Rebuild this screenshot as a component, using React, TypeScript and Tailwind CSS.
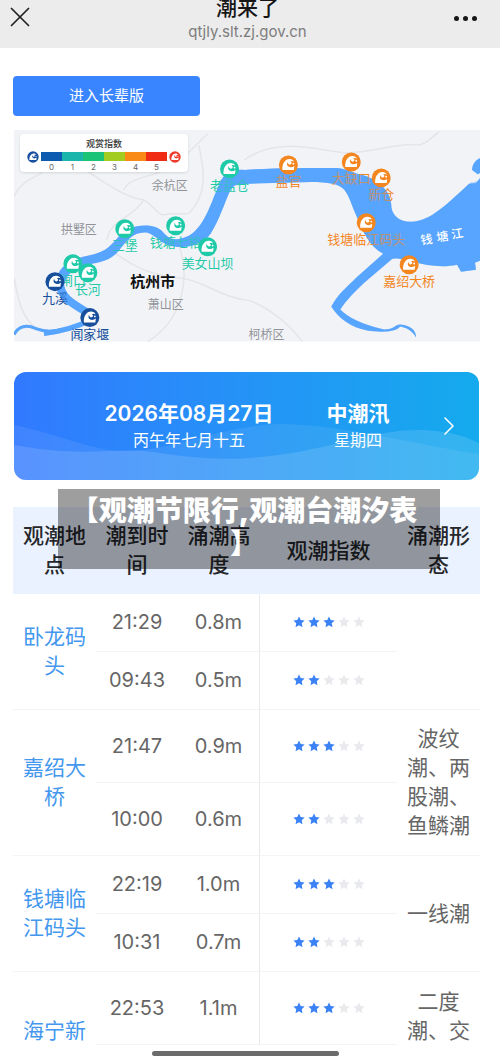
import React from "react";
import { X, ChevronRight } from "lucide-react";

const RIVER =
  "M245 170C275 168 300 168 338 168C348 169 354 173 363 175C378 179 391 190 392 204C392 215 399 222 412 222C432 221 448 204 472 182C478 182 481 180 481 176V261L476 263L477 270L462 272L458 265C440 269 420 264 405 260C399 259 395 258 392 260L365 283C356 292 347 300 341 310C349 318 362 325 385 330C395 330 396 325 401 325C412 326 417 331 417 338C413 331 407 328 401 327C397 333 380 333 368 331C352 328 339 319 332 307C338 295 347 288 358 277L384 254C370 247 364 232 358 218C352 205 350 196 345 190C341 184 328 182 312 182L245 184Z";

const STREAM =
  "M56 284C56 274 62 266 72 261C84 255 98 256 108 248C118 240 120 232 132 228C142 224 156 225 162 231C168 237 170 241 180 239C198 237 207 216 214 198C219 186 222 176 229 172C234 169 240 170 246 170V184C240 184 234 184 231 190C225 203 220 220 211 234C205 243 190 249 176 247C162 246 156 235 148 233C134 231 127 241 119 251C108 264 96 262 84 266C72 270 66 276 65 284Z";

type Spot = { name: string; x: number; y: number; color: string };

const GREEN = "#1fcaa8";
const ORANGE = "#f3861f";
const NAVY = "#174f9c";

const SPOTS: Spot[] = [
  { name: "老盐仓", x: 230, y: 169, color: GREEN },
  { name: "盐官", x: 289, y: 165, color: ORANGE },
  { name: "大缺口", x: 352, y: 162, color: ORANGE },
  { name: "新仓", x: 382, y: 178, color: ORANGE },
  { name: "钱塘临江码头", x: 367, y: 223, color: ORANGE },
  { name: "嘉绍大桥", x: 410, y: 265, color: ORANGE },
  { name: "钱塘七格", x: 176, y: 226, color: GREEN },
  { name: "美女山坝", x: 208, y: 247, color: GREEN },
  { name: "三堡", x: 125, y: 229, color: GREEN },
  { name: "闸口", x: 73, y: 264, color: GREEN },
  { name: "长河", x: 88, y: 273, color: GREEN },
  { name: "九溪", x: 55, y: 282, color: NAVY },
  { name: "闻家堰", x: 90, y: 318, color: NAVY },
];

function Water() {
  return (
    <>
      <path d={STREAM} fill="#58a5ff" />
      <path d={RIVER} fill="#58a5ff" />
      <g fill="none" stroke="#58a5ff">
        <path d="M60 282C60 298 72 304 91 315" strokeWidth="8" />
        <path d="M14 335C19 326 27 325 36 329C46 333 54 332 62 330" strokeWidth="3" />
        <path d="M44 334C62 332 76 328 92 320" strokeWidth="5" />
      </g>
    </>
  );
}

function WaveMark({ color }: { color: string }) {
  return (
    <>
      <circle r="9.5" fill={color} />
      <path
        d="M-6 5C-6.500 -1 -3.500 -6 1.200 -6C3.500 -6 5 -5 5.600 -3.300C4.200 -4.200 2.700 -4 1.900 -3.100C3 -3 3.500 -2 3 -1.100C2.400 -.1 1 0 .1 -.9C-.6 -1.500 -.8 -2.400 -.6 -3.200C-1.800 -1.600 -1.600 .6 0 1.700C1.800 2.900 4 2.400 6 1L5.500 5Z"
        fill="#fff"
      />
      <circle cx="5" cy="-1.200" r=".9" fill="#fff" />
    </>
  );
}

function LegendMark({ color }: { color: string }) {
  return (
    <svg viewBox="-10 -10 20 20" className="size-3 shrink-0" aria-hidden="true">
      <WaveMark color={color} />
    </svg>
  );
}

const SCALE = [
  "bg-[#0d5bb0]",
  "bg-[#1cb5ac]",
  "bg-[#1bc376]",
  "bg-[#a3cc20]",
  "bg-[#f98a17]",
  "bg-[#f02c14]",
];

function RiverMap() {
  return (
    <section className="relative ml-px mt-3.5 overflow-hidden" aria-label="观潮地图">
      <svg viewBox="14 130 467 212" className="block w-full">
        <rect x="14" y="130" width="467" height="212" fill="#f2f3f7" />
        <g fill="none" stroke="#e4e5e9" strokeWidth="1.5">
          <path d="M14 197C20 182 32 179 42 173M88 172C105 182 125 198 144 200C160 210 157 218 170 214H188M124 190C128 180 142 178 155 174C180 166 190 150 208 134M199 145C206 175 207 195 189 214M144 200C134 218 110 220 107 240M108 248C130 265 150 276 180 278C205 281 220 298 250 301C270 308 290 325 303 342M180 248C190 278 184 320 148 342M14 278C18 300 22 320 38 330M245 160C275 138 310 148 345 153C380 152 400 142 420 145C430 143 432 137 440 132" />
        </g>
        <Water />
        <path d="M481 158C475 161 473 166 473 170L481 176Z" fill="#58a5ff" />
        <path d="M481 173C475 177 469 180 466 184L477 183L481 178Z" fill="#f2f3f7" />

        <g textAnchor="middle" fontSize="13">
          {SPOTS.map((s) => (
            <text key={s.name} x={s.x} y={s.y + 21} fill={s.color}>
              {s.name}
            </text>
          ))}
        </g>
        <g opacity=".35">
          <Water />
        </g>
        {SPOTS.map((s) => (
          <g key={s.name} transform={`translate(${s.x} ${s.y})`}>
            <WaveMark color={s.color} />
          </g>
        ))}

        <g textAnchor="middle" fontSize="12" fill="#919398">
          <text x="170" y="190">余杭区</text>
          <text x="79" y="234">拱墅区</text>
          <text x="166" y="309">萧山区</text>
          <text x="267" y="339">柯桥区</text>
        </g>
        <text x="153" y="287" textAnchor="middle" fontSize="15" fontWeight="700" fill="#111">
          杭州市
        </text>
        <g fontSize="12" fontWeight="500" fill="#fff" textAnchor="middle">
          <text transform="translate(428 244) rotate(-9)">钱</text>
          <text transform="translate(444 241) rotate(-9)">塘</text>
          <text transform="translate(459 238) rotate(-9)">江</text>
        </g>
      </svg>

      <div className="absolute left-1.5 top-1 flex h-[38px] w-[168px] flex-col items-center rounded-sm bg-white pt-1 shadow-sm">
        <div className="text-[9px] font-medium leading-[11px] text-[#333]">观赏指数</div>
        <div className="mt-0.5 flex items-start gap-0.5">
          <LegendMark color="#174fa0" />
          <ul className="flex text-center text-[8px] leading-[9px] text-[#666]">
            {SCALE.map((tone, i) => (
              <li key={tone} className="w-[21px]">
                <span className={`mb-0.5 mt-px block h-[9px] ${tone}`} />
                {i}
              </li>
            ))}
          </ul>
          <LegendMark color="#ef3b2b" />
        </div>
      </div>
    </section>
  );
}

function Stars({ value }: { value: number }) {
  return (
    <div className="flex justify-center gap-[3px]" role="img" aria-label={`${value} / 5`}>
      {[1, 2, 3, 4, 5].map((n) => (
        <svg
          key={n}
          viewBox="0 0 24 24"
          className={n <= value ? "size-3 fill-[#3b82f6]" : "size-3 fill-[#e9eaed]"}
        >
          <path d="M12 1l3.400 7.200 7.800 1-5.700 5.400 1.400 7.900L12 18.700l-6.900 3.800 1.400-7.900L.8 9.200l7.800-1z" />
        </svg>
      ))}
    </div>
  );
}

type Tide = { time: string; height: string; stars: number };
type Place = { name: string; form: string; tides: Tide[]; tall?: boolean; last?: boolean };

const PLACES: Place[] = [
  {
    name: "卧龙码头",
    form: "",
    tides: [
      { time: "21:29", height: "0.8m", stars: 3 },
      { time: "09:43", height: "0.5m", stars: 2 },
    ],
  },
  {
    name: "嘉绍大桥",
    form: "波纹潮、两股潮、鱼鳞潮",
    tall: true,
    tides: [
      { time: "21:47", height: "0.9m", stars: 3 },
      { time: "10:00", height: "0.6m", stars: 2 },
    ],
  },
  {
    name: "钱塘临江码头",
    form: "一线潮",
    tides: [
      { time: "22:19", height: "1.0m", stars: 3 },
      { time: "10:31", height: "0.7m", stars: 2 },
    ],
  },
  {
    name: "海宁新",
    form: "二度潮、交",
    tall: true,
    last: true,
    tides: [{ time: "22:53", height: "1.1m", stars: 3 }],
  },
];

function TideTable() {
  return (
    <table className="w-full table-fixed border-separate border-spacing-0 text-center text-[21px] leading-[29px] text-[#666]">
      <colgroup>
        <col className="w-[83px]" />
        <col className="w-[82px]" />
        <col className="w-[82px]" />
        <col />
        <col className="w-[83px]" />
      </colgroup>
      <thead className="bg-[#ebf2ff] text-[#26282c]">
        <tr className="h-[87px]">
          <th scope="col" className="px-2.5 font-medium">观潮地点</th>
          <th scope="col" className="px-2 font-medium">潮到时间</th>
          <th scope="col" className="px-2 font-medium">涌潮高度</th>
          <th scope="col" className="font-medium">观潮指数</th>
          <th scope="col" className="px-2.5 font-medium">涌潮形态</th>
        </tr>
      </thead>
      <tbody>
        {PLACES.map((p) =>
          p.tides.map((t, i) => (
            <tr key={t.time} className={p.tall ? "h-[73px]" : "h-[58px]"}>
              {i === 0 && (
                <th
                  scope="rowgroup"
                  rowSpan={p.tides.length}
                  className={
                    p.last
                      ? "px-2.5 align-bottom font-normal text-[#4397ee]"
                      : "border-b border-[#f3f4f6] px-2.5 align-middle font-normal text-[#4397ee]"
                  }
                >
                  {p.name}
                </th>
              )}
              <td className="border-b border-[#f3f4f6] text-xl">{t.time}</td>
              <td className="border-b border-r border-[#f3f4f6] border-r-[#e8e9ec] text-xl">
                {t.height}
              </td>
              <td className="border-b border-[#f3f4f6]">
                <Stars value={t.stars} />
              </td>
              {i === 0 && (
                <td
                  rowSpan={p.tides.length}
                  className={
                    p.last
                      ? "px-2.5 align-bottom"
                      : "border-b border-[#f3f4f6] px-2.5 align-middle"
                  }
                >
                  {p.form}
                </td>
              )}
            </tr>
          )),
        )}
      </tbody>
    </table>
  );
}

export default function App() {
  return (
    <div className="overflow-hidden bg-white font-['Inter','Noto_Sans_CJK_SC',sans-serif]">
      <header className="flex h-12 items-start justify-between bg-[#ececec] px-[3px]">
        <button type="button" aria-label="关闭" className="text-[#222]">
          <X size={34} strokeWidth={1.2} />
        </button>
        <div className="-mt-1.5 pl-1 text-center">
          <h1 className="text-[21px] font-medium leading-7 text-[#161616]">潮来了</h1>
          <p className="text-[15px] leading-5 text-[#7d7d7d]">qtjly.slt.zj.gov.cn</p>
        </div>
        <button type="button" aria-label="更多" className="mr-5 mt-3.5 flex h-2 items-center gap-1">
          <span className="size-[5px] rounded-full bg-[#161616]" />
          <span className="size-[5px] rounded-full bg-[#161616]" />
          <span className="size-[5px] rounded-full bg-[#161616]" />
        </button>
      </header>

      <main className="pl-[13px] pr-5 pt-7">
        <button
          type="button"
          className="block h-10 w-2/5 rounded bg-[#3985ff] text-[15px] text-white"
        >
          进入长辈版
        </button>

        <RiverMap />

        <section className="relative mx-px mt-[30px] flex h-[108px] items-center overflow-hidden rounded-xl bg-linear-to-r from-[#3179ff] to-[#14aaed] text-center text-white">
          <svg
            viewBox="0 0 466 108"
            preserveAspectRatio="none"
            className="absolute inset-0 size-full"
            aria-hidden="true"
          >
            <path
              d="M0 53C55 65 80 80 115 79C165 77 220 51 270 52C330 53 400 72 466 82V108H0Z"
              fill="#fff"
              fillOpacity=".08"
            />
            <path
              d="M0 73C70 86 100 75 140 80C190 88 230 90 290 79C340 69 370 58 405 58C430 58 450 63 466 71V108H0Z"
              fill="#fff"
              fillOpacity=".13"
            />
          </svg>
          <div className="relative ml-[86px] w-[178px]">
            <div className="text-[21px] font-semibold leading-7">2026年08月27日</div>
            <div className="text-base leading-6">丙午年七月十五</div>
          </div>
          <div className="relative ml-9 w-[88px]">
            <div className="text-[21px] font-semibold leading-7">中潮汛</div>
            <div className="text-base leading-6">星期四</div>
          </div>
          <button type="button" aria-label="后一天" className="relative ml-auto mr-3.5">
            <ChevronRight size={32} strokeWidth={1.2} />
          </button>
        </section>

        <div className="relative mt-[27px]">
          <TideTable />
          <div className="absolute -top-[18px] left-[45px] right-10 h-20 bg-black/38 pl-3 pr-[22px] pt-1.5 text-center text-[28px] font-black leading-[33px] text-white">
            <p className="whitespace-nowrap">
              【观潮节限行,观潮台潮汐表
              <br />】
            </p>
          </div>
        </div>
      </main>
      <div className="flex h-[15px] justify-center pr-2.5 pt-1.5">
        <div className="h-[5px] w-[187px] rounded-full bg-[#6b6b6b]" />
      </div>
    </div>
  );
}
